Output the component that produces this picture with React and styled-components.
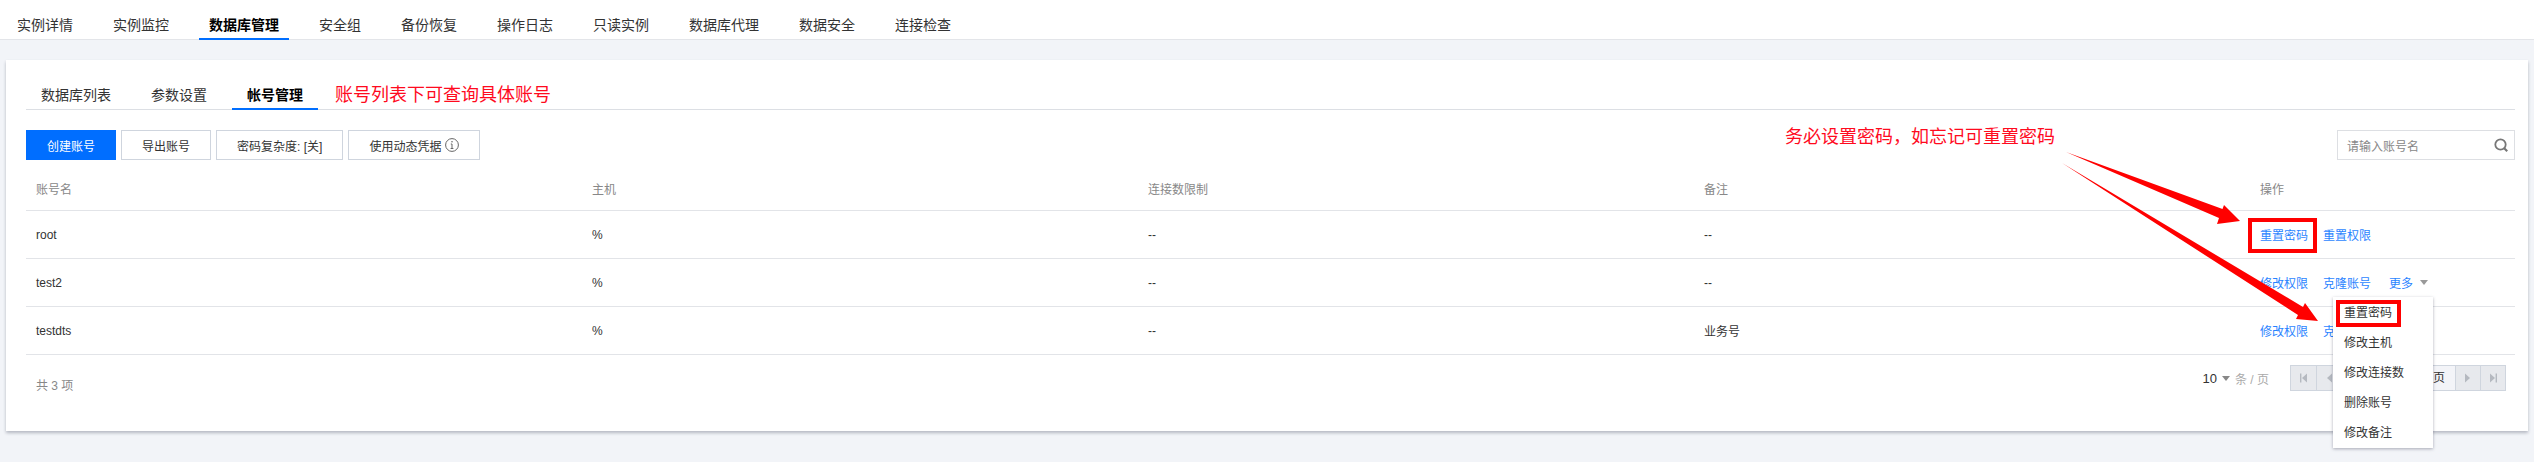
import React from "react";
import styled, { createGlobalStyle } from "styled-components";

const Global = createGlobalStyle`
  html, body { margin: 0; padding: 0; background: #f2f4f8; overflow: hidden; }
  * { box-sizing: border-box; }
  body { font-family: "Liberation Sans", "Noto Sans CJK SC", sans-serif; font-size: 12px; color: #333; }
`;

const Page = styled.div`
  position: relative;
  width: 2534px;
  height: 462px;
  overflow: hidden;
`;
const TopTabs = styled.nav`
  display: flex;
  gap: 20px;
  height: 40px;
  padding-left: 7px;
  background: #fff;
  border-bottom: 1px solid #e3e5e9;
`;
const TopTab = styled.div`
  height: 40px;
  padding: 15px 10px 0;
  line-height: 20px;
  font-size: 14px;
  color: ${(p) => (p.$active ? "#000" : "#333")};
  font-weight: ${(p) => (p.$active ? 700 : 400)};
  border-bottom: ${(p) => (p.$active ? "2px solid #006eff" : "none")};
`;
const Card = styled.main`
  margin: 20px 6px 0;
  height: 371px;
  padding: 20px 13px 0 20px;
  background: #fff;
  box-shadow: 0 2px 3px rgba(54, 58, 80, 0.32);
`;
const SubTabs = styled.div`
  display: flex;
  align-items: flex-start;
  gap: 10px;
  height: 30px;
  border-bottom: 1px solid #dcdfe4;
`;
const SubTab = styled.div`
  height: 30px;
  padding: 0 15px;
  line-height: 30px;
  font-size: 14px;
  color: ${(p) => (p.$active ? "#000" : "#333")};
  font-weight: ${(p) => (p.$active ? 700 : 400)};
  border-bottom: ${(p) => (p.$active ? "2px solid #006eff" : "none")};
`;
const TabNote = styled.span`
  margin-left: 7px;
  line-height: 30px;
  font-size: 18px;
  color: #ff0a1e;
`;
const Toolbar = styled.div`
  display: flex;
  gap: 5px;
  margin-top: 20px;
  height: 30px;
`;
const Button = styled.div`
  display: flex;
  align-items: center;
  gap: 4px;
  height: 30px;
  padding: 0 20px;
  border: 1px solid ${(p) => (p.$primary ? "#006eff" : "#cfd5de")};
  background: ${(p) => (p.$primary ? "#006eff" : "#fff")};
  color: ${(p) => (p.$primary ? "#fff" : "#333")};
  white-space: nowrap;
`;
const Search = styled.div`
  display: flex;
  align-items: center;
  justify-content: space-between;
  width: 178px;
  height: 30px;
  margin-left: auto;
  padding: 0 5px 0 9px;
  border: 1px solid #dddfe3;
  color: #888;
`;
const Row = styled.div`
  display: grid;
  grid-template-columns: repeat(4, 556px) 1fr;
  align-items: center;
  height: ${(p) => (p.$head ? "42px" : "48px")};
  margin-top: ${(p) => (p.$head ? "9px" : "0")};
  padding-bottom: ${(p) => (p.$head ? "2px" : "0")};
  border-bottom: 1px solid #e2e4e8;
  color: ${(p) => (p.$head ? "#888" : "#333")};
`;
const Cell = styled.div`
  padding-left: 10px;
  white-space: nowrap;
`;
const Actions = styled(Cell)`
  display: flex;
  align-items: center;
  gap: 15px;
`;
const Link = styled.span`
  color: #006eff;
  opacity: 0.85;
`;
const More = styled(Link)`
  display: flex;
  align-items: center;
  gap: 7px;
  margin-left: 3px;
`;
const Caret = styled.i`
  display: inline-block;
  border-left: 4px solid transparent;
  border-right: 4px solid transparent;
  border-top: 5px solid #888;
`;
const Footer = styled.footer`
  display: flex;
  align-items: center;
  height: 26px;
  margin-top: 10px;
  padding-left: 10px;
  padding-right: 9px;
`;
const Total = styled.span`
  color: #888;
  margin-top: 12px;
  margin-right: auto;
`;
const PageSize = styled.span`
  display: flex;
  align-items: center;
  gap: 5px;
  margin-right: 21px;
  color: #aaa;
`;
const SizeValue = styled.span`
  color: #333;
  font-size: 13px;
`;
const Pager = styled.div`
  display: flex;
  height: 26px;
  border: 1px solid #cfd5de;
`;
const PageBtn = styled.div`
  display: flex;
  align-items: center;
  justify-content: center;
  width: 25px;
  background: #e7e9ed;
  border-left: ${(p) => (p.$first ? "none" : "1px solid #cfd5de")};
`;
const PageInfo = styled.div`
  width: 114px;
  padding-right: 10px;
  line-height: 24px;
  text-align: right;
  font-size: 12px;
  background: #f3f4f8;
  border-left: 1px solid #cfd5de;
`;
const Note = styled.div`
  position: absolute;
  left: 1785px;
  top: 125px;
  line-height: 24px;
  font-size: 18px;
  color: #ff0a1e;
  white-space: nowrap;
`;
const Menu = styled.div`
  position: absolute;
  left: 2333px;
  top: 297px;
  width: 100px;
  height: 151px;
  padding: 1px 0;
  background: #fff;
  box-shadow: 0 1px 3px rgba(54, 58, 80, 0.4);
`;
const MenuItem = styled.div`
  height: 30px;
  line-height: 30px;
  padding-left: 11px;
  color: #333;
`;
const Marker = styled.div`
  position: absolute;
  left: ${(p) => p.$x}px;
  top: ${(p) => p.$y}px;
  width: ${(p) => p.$w}px;
  height: ${(p) => p.$h}px;
  border: 4px solid #ff0000;
`;
const Arrows = styled.svg`
  position: absolute;
  left: 0;
  top: 0;
  pointer-events: none;
`;

const SearchIcon = () => (
  <svg width="16" height="16" viewBox="0 0 16 16" fill="none" stroke="#777" strokeWidth="1.8">
    <circle cx="7.5" cy="7.5" r="5.2" />
    <path d="M11 11l3.2 3.2" strokeWidth="2.2" />
  </svg>
);
const InfoIcon = () => (
  <svg width="14" height="14" viewBox="0 0 14 14" fill="none" stroke="#666">
    <circle cx="7" cy="7" r="6.4" />
    <path d="M7 6v4.5M5.8 6H7M5.6 10.5h2.8" />
    <circle cx="7" cy="3.8" r="0.8" fill="#666" stroke="none" />
  </svg>
);
const PagerIcon = ({ dir, edge }) => (
  <svg width="10" height="10" viewBox="0 0 10 10" fill="#b5b9c0">
    <g transform={dir === "left" ? "" : "rotate(180 5 5)"}>
      {edge && <rect x="1" y="0.5" width="1.4" height="9" />}
      <path d="M8 0.5v9L3 5z" />
    </g>
  </svg>
);

const topTabs = ["实例详情", "实例监控", "数据库管理", "安全组", "备份恢复", "操作日志", "只读实例", "数据库代理", "数据安全", "连接检查"];
const rows = [
  { name: "root", note: "--", links: ["重置密码", "重置权限"] },
  { name: "test2", note: "--", links: ["修改权限", "克隆账号"], more: true },
  { name: "testdts", note: "业务号", links: ["修改权限", "克隆账号"], more: true },
];
const menu = ["重置密码", "修改主机", "修改连接数", "删除账号", "修改备注"];

export default function App() {
  return (
    <Page>
      <Global />
      <TopTabs>
        {topTabs.map((t) => (
          <TopTab key={t} $active={t === "数据库管理"}>{t}</TopTab>
        ))}
      </TopTabs>
      <Card>
        <SubTabs>
          <SubTab>数据库列表</SubTab>
          <SubTab>参数设置</SubTab>
          <SubTab $active>帐号管理</SubTab>
          <TabNote>账号列表下可查询具体账号</TabNote>
        </SubTabs>
        <Toolbar>
          <Button $primary>创建账号</Button>
          <Button>导出账号</Button>
          <Button>密码复杂度: [关]</Button>
          <Button>使用动态凭据 <InfoIcon /></Button>
          <Search>请输入账号名<SearchIcon /></Search>
        </Toolbar>
        <Row $head>
          <Cell>账号名</Cell>
          <Cell>主机</Cell>
          <Cell>连接数限制</Cell>
          <Cell>备注</Cell>
          <Cell>操作</Cell>
        </Row>
        {rows.map((r) => (
          <Row key={r.name}>
            <Cell>{r.name}</Cell>
            <Cell>%</Cell>
            <Cell>--</Cell>
            <Cell>{r.note}</Cell>
            <Actions>
              {r.links.map((l) => <Link key={l}>{l}</Link>)}
              {r.more && <More>更多 <Caret /></More>}
            </Actions>
          </Row>
        ))}
        <Footer>
          <Total>共 3 项</Total>
          <PageSize>
            <SizeValue>10</SizeValue>
            <Caret />
            条 / 页
          </PageSize>
          <Pager>
            <PageBtn $first><PagerIcon dir="left" edge /></PageBtn>
            <PageBtn><PagerIcon dir="left" /></PageBtn>
            <PageInfo>页</PageInfo>
            <PageBtn><PagerIcon dir="right" /></PageBtn>
            <PageBtn><PagerIcon dir="right" edge /></PageBtn>
          </Pager>
        </Footer>
      </Card>
      <Note>务必设置密码，如忘记可重置密码</Note>
      <Marker $x={2248} $y={218} $w={69} $h={35} />
      <Arrows width="2534" height="462" viewBox="0 0 2534 462">
        <path d="M2066 152L2222.5 209L2224 205L2240 221L2217 224L2219 218Z" fill="#ff0000" />
        <path d="M2062 163L2303 307L2305 303L2318 321L2296 319L2298 315Z" fill="#ff0000" />
      </Arrows>
      <Menu>
        {menu.map((m) => <MenuItem key={m}>{m}</MenuItem>)}
      </Menu>
      <Marker $x={2336} $y={300} $w={65} $h={27} />
    </Page>
  );
}
